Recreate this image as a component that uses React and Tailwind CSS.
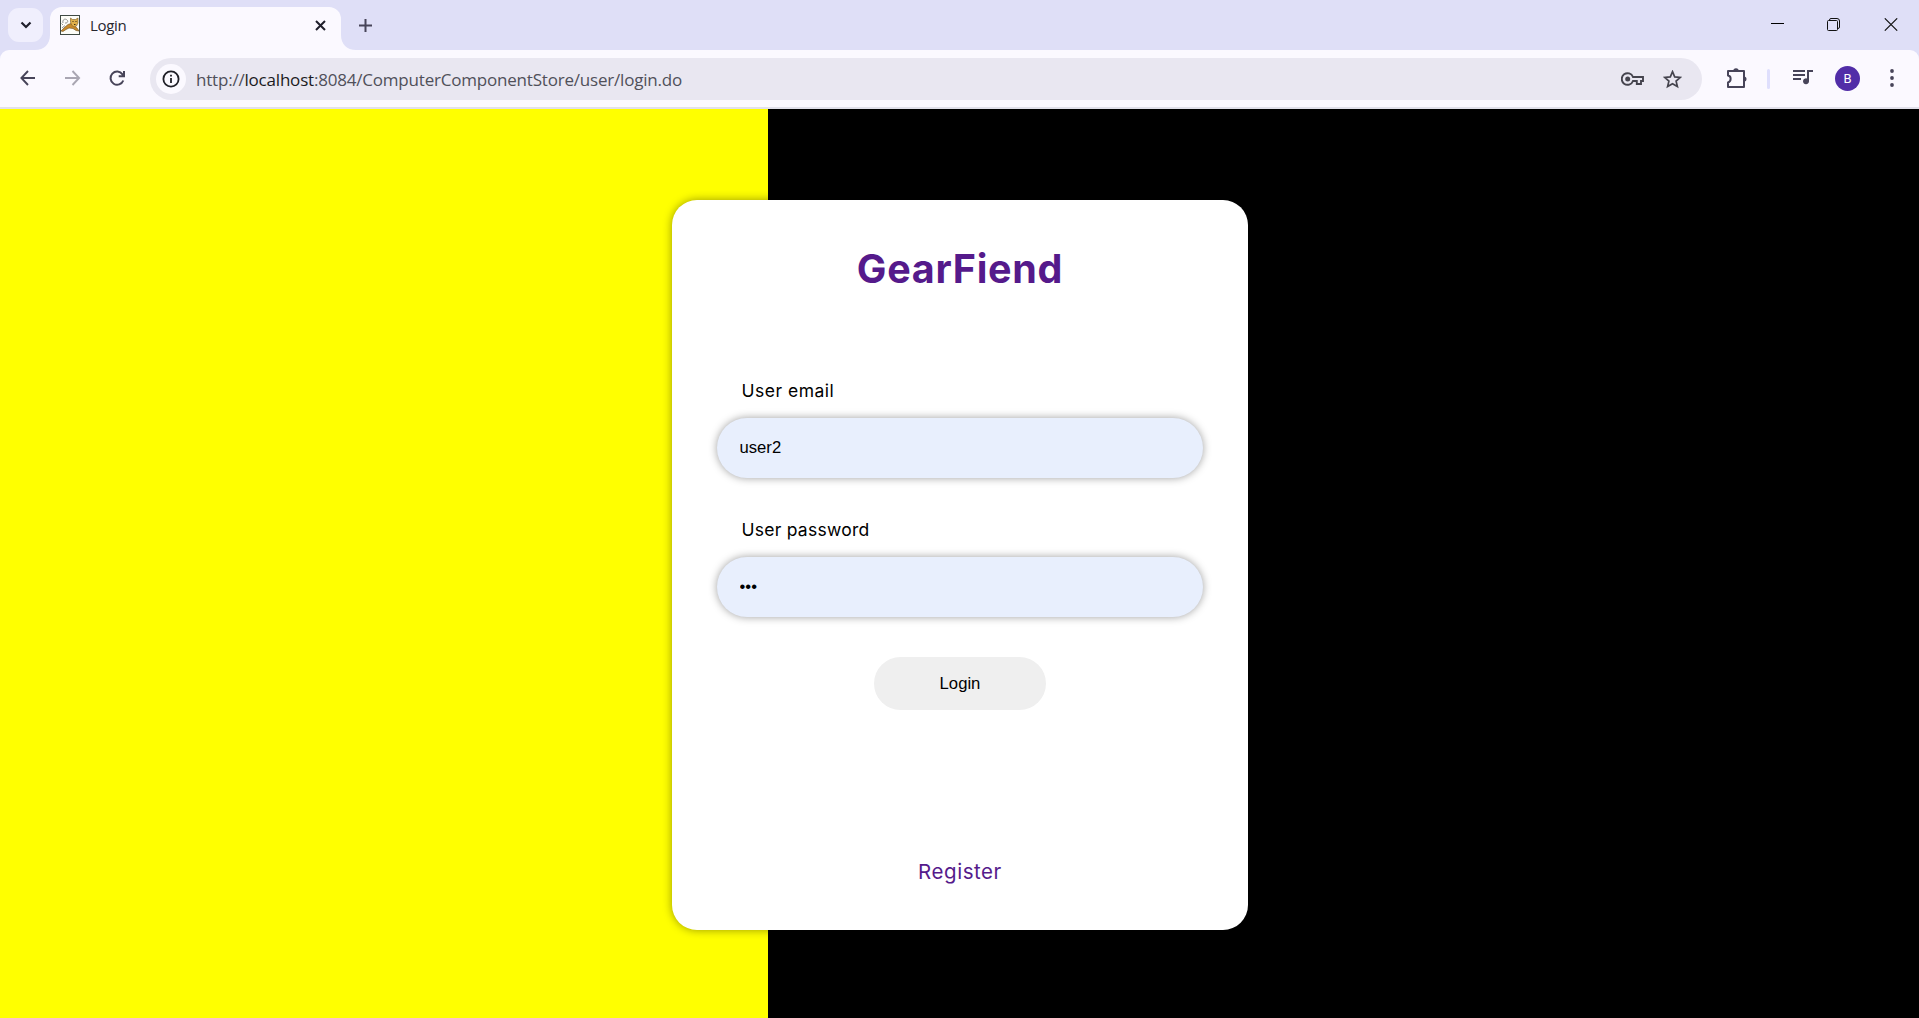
import React from "react";

const ink = "#474459";

function Favicon() {
  return (
    <svg width="20" height="20" viewBox="0 0 20 20" className="shrink-0">
      <rect x="0.5" y="0.5" width="19" height="19" fill="#fdfdf8" stroke="#3f4a44" />
      <path d="M3 8C2 5 5 2.500 7.500 5.500C8.500 7 6.500 8.500 5 8M2 13L5 10.500M3 10L1.500 8.500" fill="none" stroke="#777" strokeWidth="0.800" />
      <path d="M1 16L5 12L8 9.500L11 8.500L14 10.500L17 13L19 16L16 15.500L13 13.500L9 13L6 14.500L3 16.500Z" fill="#c98a2b" stroke="#6b4d20" strokeWidth="0.600" />
      <path d="M10.500 3L12.500 4.500H15.500L18 3L18 8L16.500 11L14 12L11.500 10L10.500 7Z" fill="#e0b04a" stroke="#7a5a22" strokeWidth="0.600" />
      <path d="M12.500 6.500H13.500M15.500 6.500H16.500M14 9.500H15.500" stroke="#403018" strokeWidth="1" />
    </svg>
  );
}

function TabStrip() {
  return (
    <div className="flex h-[50px] bg-[#dfdff7] text-[#1f1f2b]">
      <div className="w-[50px] pl-2 pt-2">
        <button className="flex h-[34px] w-[35px] items-center justify-center rounded-[11px] bg-[#f0effd]">
          <svg width="12" height="8" viewBox="0 0 12 8" fill="none" stroke="#1f1f2b" strokeWidth="2.200">
            <path d="M1.500 1.500L6 6L10.500 1.500" />
          </svg>
        </button>
      </div>
      <div className="relative mt-[7px] flex h-[43px] w-[291px] rounded-t-[12px] bg-[#fbf9ff] px-[10px]">
        <svg className="absolute bottom-0 -left-[15px]" width="15" height="15" viewBox="0 0 15 15">
          <path d="M15 0V15H0C9 15 15 9 15 0Z" fill="#fbf9ff" />
        </svg>
        <svg className="absolute bottom-0 -right-[15px]" width="15" height="15" viewBox="0 0 15 15">
          <path d="M0 0V15H15C6 15 0 9 0 0Z" fill="#fbf9ff" />
        </svg>
        <div className="mt-2 flex h-5 flex-1 items-center">
          <Favicon />
          <span className="ml-[10px] font-['Open_Sans','Noto_Sans',sans-serif] text-[15px] leading-5 tracking-[-0.35px] text-[#27272f]">Login</span>
          <svg className="mr-[5px] ml-auto" width="11" height="11" viewBox="0 0 11 11" stroke="#1f1f2b" strokeWidth="2">
            <path d="M1 1L10 10M10 1L1 10" />
          </svg>
        </div>
      </div>
      <svg className="ml-[18px] mt-[19px]" width="13" height="13" viewBox="0 0 13 13" stroke={ink} strokeWidth="2">
        <path d="M6.500 0V13M0 6.500H13" />
      </svg>
      <div className="ml-auto flex pr-[21px] pt-[18px]">
        <svg className="mr-[43px]" width="13" height="13" viewBox="0 0 13 13" stroke="#000">
          <path d="M0 5.500H13" />
        </svg>
        <svg className="mr-[44px]" width="13" height="13" viewBox="0 0 13 13" fill="none" stroke="#111">
          <rect x="0.500" y="2.500" width="10" height="10" rx="1" />
          <path d="M2.500 2.500V2Q2.500 0.500 4 0.500H10Q12.500 0.500 12.500 3V9Q12.500 10.500 11 10.500" />
        </svg>
        <svg width="14" height="13" viewBox="0 0 14 13" stroke="#111" strokeWidth="1.100">
          <path d="M0.800 0.300L13.200 12.700M13.200 0.300L0.800 12.700" />
        </svg>
      </div>
    </div>
  );
}

function Toolbar() {
  return (
    <div className="bg-[#dfdff7]">
      <div className="flex h-[59px] rounded-t-[9px] border-b-2 border-[#e1e0ea] bg-[#fbf9ff] pt-2">
        <div className="flex h-[42px] w-[150px] items-center pl-5">
          <svg width="16" height="16" viewBox="0 0 16 16" fill="none" stroke={ink} strokeWidth="1.900" className="mb-[2px]">
            <path d="M15 8H1.500M8 1L1.400 8L8 15" />
          </svg>
          <svg width="16" height="16" viewBox="0 0 16 16" fill="none" stroke="#a9a6b2" strokeWidth="1.900" className="mb-[2px] ml-[29px]">
            <path d="M0 8H13.800M7.500 1L14.100 8L7.500 15" />
          </svg>
          <svg width="17" height="17" viewBox="0 0 17 17" fill="none" stroke={ink} strokeWidth="2" className="mb-[2px] ml-[28px]">
            <path d="M14.300 10.500A6.600 6.600 0 1 1 13.500 4.300L15 6M15 1V6.300H9.700" />
          </svg>
        </div>
        <div className="flex h-[42px] w-[1552px] items-center rounded-full bg-[#e9e7f1] pl-[6px]">
          <span className="flex size-[30px] items-center justify-center rounded-full bg-[#fbf9ff]">
            <svg width="18" height="18" viewBox="0 0 18 18" fill="none" stroke="#1f1f27" strokeWidth="1.800">
              <circle cx="9" cy="9" r="7.600" />
              <path d="M9 8V13M9 4.700V6.500" />
            </svg>
          </span>
          <span className="ml-[10px] pt-px font-['Open_Sans','Noto_Sans',sans-serif] text-[17px] leading-6 tracking-[-0.2px] whitespace-pre text-[#50505a]">
            http://<span className="text-[#1b1b22]">localhost</span>:8084/ComputerComponentStore/user/login.do
          </span>
          <svg className="ml-auto" width="23" height="14" viewBox="0 0 23 14" fill="none" stroke="#45444e" strokeWidth="1.900">
            <path d="M12 5H22V9H20V12H15.800V9H12A5.800 5.800 0 1 1 12 5Z" />
            <circle cx="6.700" cy="7" r="2.500" fill="#45444e" stroke="none" />
          </svg>
          <svg className="mr-[20px] ml-[19px]" width="19" height="19" viewBox="0 0 19 19" fill="none" stroke="#45444e" strokeWidth="1.700">
            <path d="M9.500 1.700L11.700 6.900L17.300 7.400L13.100 11.100L14.400 16.600L9.500 13.700L4.600 16.600L5.900 11.100L1.700 7.400L7.300 6.900Z" />
          </svg>
        </div>
        <div className="ml-auto flex h-[42px] items-center pr-[25px]">
          <svg width="22" height="22" viewBox="0 0 22 22" fill="none" stroke={ink} strokeWidth="2" strokeLinejoin="round" className="mb-[2px]">
            <path d="M2 4H18V20H2V15.500C5.500 14.500 5.500 9 2 8.500Z" />
            <path d="M7.300 4A2.700 2.700 0 0 1 12.700 4ZM18 9.500A2.500 2.500 0 0 1 18 14.500Z" fill={ink} stroke="none" />
          </svg>
          <span className="ml-[19px] h-5 w-[3px] rounded-full bg-[#dfdffd]" />
          <svg className="mb-[3px] ml-[23px]" width="20" height="15" viewBox="0 0 20 15" fill={ink}>
            <path d="M0 0H12V2H0ZM0 4H12V6H0ZM0 8H8V10H0ZM14 0H20V2H16V11A3 3 0 1 1 14 8.500Z" />
          </svg>
          <span className="mb-[2px] ml-[22px] flex size-[25px] items-center justify-center rounded-full bg-[#512da8] font-['Roboto',sans-serif] text-[13px] leading-none text-white">B</span>
          <svg className="mb-[2px] ml-[30px]" width="4" height="18" viewBox="0 0 4 18" fill={ink}>
            <circle cx="2" cy="2" r="1.900" />
            <circle cx="2" cy="9" r="1.900" />
            <circle cx="2" cy="16" r="1.900" />
          </svg>
        </div>
      </div>
    </div>
  );
}

const label = "h-[26px] w-[436px] text-[17.5px] leading-[26px] font-[370]";
const field =
  "mt-[14px] h-[60px] w-[486px] rounded-full bg-[#e8effd] pr-6 pl-[23px] font-['Liberation_Sans',sans-serif] text-[16.67px] text-black shadow-[0_0_8px_rgba(0,0,0,0.38)] outline-none";

function LoginCard() {
  return (
    <div className="flex h-[730px] w-[576px] flex-col items-center rounded-[25px] bg-white font-['Inter',sans-serif] text-black shadow-[0_0_10px_rgba(0,0,0,0.4)]">
      <h1 className="mt-[44px] h-[50px] pl-px text-[39.5px] leading-[50px] font-bold tracking-[0.7px] text-[#551a8b]">GearFiend</h1>
      <form className="mt-[84px] flex flex-col items-center" onSubmit={(e) => e.preventDefault()}>
        <label className={`${label} tracking-[0.5px]`}>User email</label>
        <input className={field} defaultValue="user2" />
        <label className={`${label} mt-[39px] tracking-[0.25px]`}>User password</label>
        <input className={field} type="password" defaultValue="123" />
        <button className="mt-10 h-[53px] w-[172px] rounded-full bg-[#efefef] pl-px font-['Liberation_Sans',sans-serif] text-[16.67px]">Login</button>
      </form>
      <a href="#" className="mt-[146px] pl-px text-[20.5px] leading-[31px] font-[370] tracking-[0.55px] text-[#551a8b]">Register</a>
    </div>
  );
}

export default function App() {
  return (
    <div className="flex h-[1018px] w-full flex-col overflow-hidden">
      <TabStrip />
      <Toolbar />
      <main className="flex flex-1 justify-center bg-[linear-gradient(to_right,#ffff00_768px,#000_768px)] pt-[91px]">
        <LoginCard />
      </main>
    </div>
  );
}
